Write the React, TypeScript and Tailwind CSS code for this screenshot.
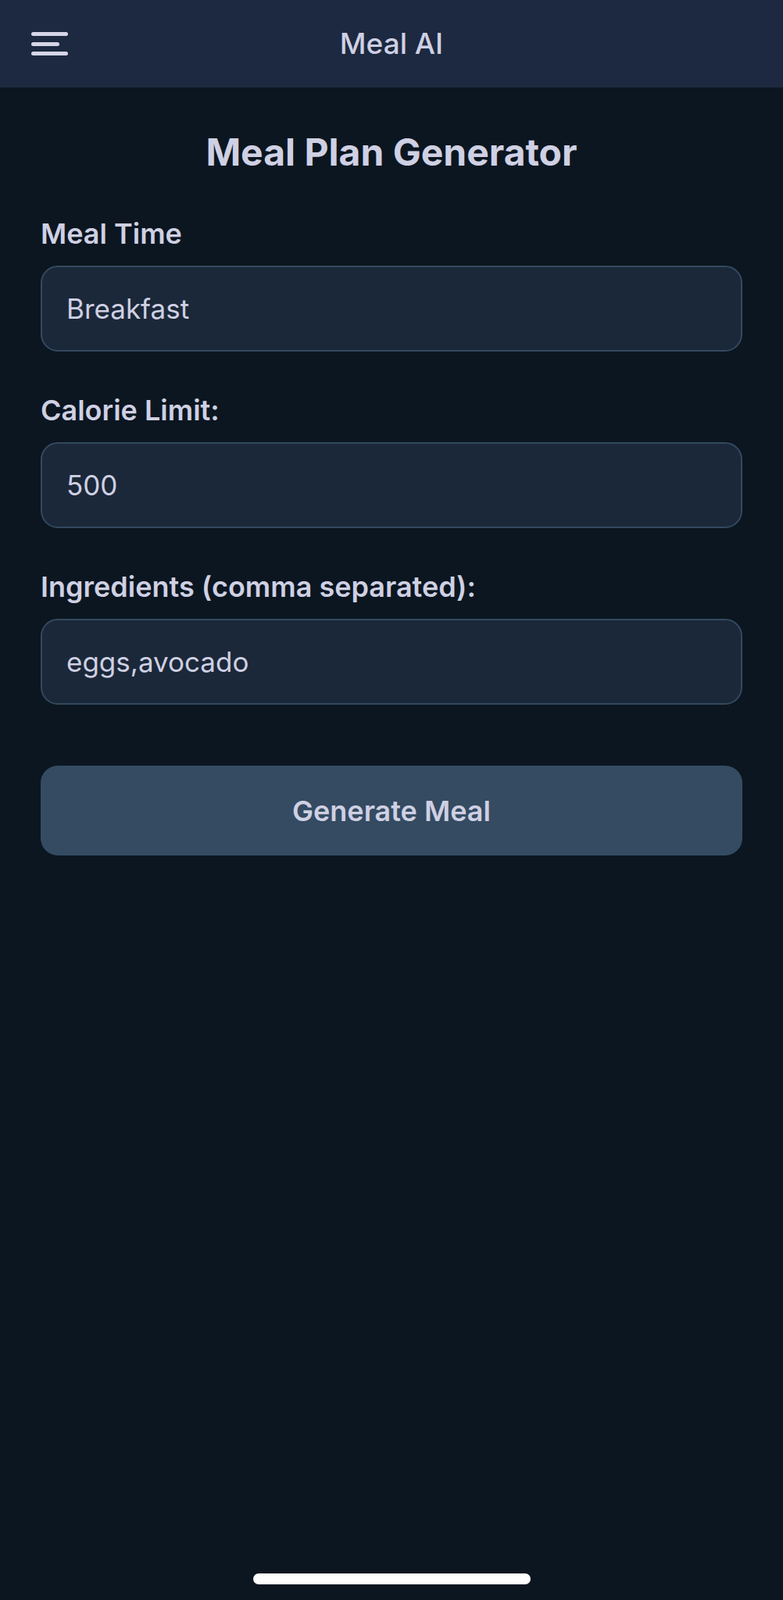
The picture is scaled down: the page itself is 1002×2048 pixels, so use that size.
import React, { useState } from 'react';

const fieldClass =
  'block w-full h-[110px] rounded-[22px] border-2 border-[#34495f] bg-[#1b2839] px-[31px] text-[35px] text-[#cfd0e3] outline-none';

const labelClass = 'block h-[40px] text-[36px] leading-[40px] font-semibold text-[#cfd0e3]';

export default function App() {
  const [mealTime, setMealTime] = useState('Breakfast');
  const [calories, setCalories] = useState('500');
  const [ingredients, setIngredients] = useState('eggs,avocado');

  return (
    <div
      className="min-h-screen flex flex-col bg-[#0b1620]"
      style={{ fontFamily: 'Inter, "Noto Sans", sans-serif' }}
    >
      <header className="relative h-[112px] flex items-center justify-center bg-[#1c2940]">
        <button className="absolute left-[40px] top-[41px] flex flex-col gap-[7.5px]">
          <span className="block w-[47px] h-[5px] rounded-full bg-[#d6d6e8]" />
          <span className="block w-[36px] h-[5px] rounded-full bg-[#d6d6e8]" />
          <span className="block w-[47px] h-[5px] rounded-full bg-[#d6d6e8]" />
        </button>
        <h1 className="text-[37px] leading-[44px] font-medium text-[#cfd0e3]">Meal AI</h1>
      </header>

      <main className="flex-1 px-[52px] pt-[53px]">
        <h2 className="text-center text-[48px] leading-[60px] font-bold text-[#cfd0e3]">
          Meal Plan Generator
        </h2>

        <label className={`${labelClass} mt-[54px]`}>Meal Time</label>
        <input
          className={`${fieldClass} mt-[21px]`}
          value={mealTime}
          onChange={(e) => setMealTime(e.target.value)}
        />

        <label className={`${labelClass} mt-[55px]`}>Calorie Limit:</label>
        <input
          className={`${fieldClass} mt-[21px]`}
          value={calories}
          onChange={(e) => setCalories(e.target.value)}
        />

        <label className={`${labelClass} mt-[55px]`}>Ingredients (comma separated):</label>
        <input
          className={`${fieldClass} mt-[21px]`}
          value={ingredients}
          onChange={(e) => setIngredients(e.target.value)}
        />

        <button className="mt-[78px] w-full h-[115px] rounded-[22px] bg-[#344b62] text-[36px] font-semibold text-[#cfd0e3]">
          Generate Meal
        </button>
      </main>

      <div className="flex justify-center pb-[20px]">
        <span className="block w-[355px] h-[14px] rounded-full bg-white" />
      </div>
    </div>
  );
}
